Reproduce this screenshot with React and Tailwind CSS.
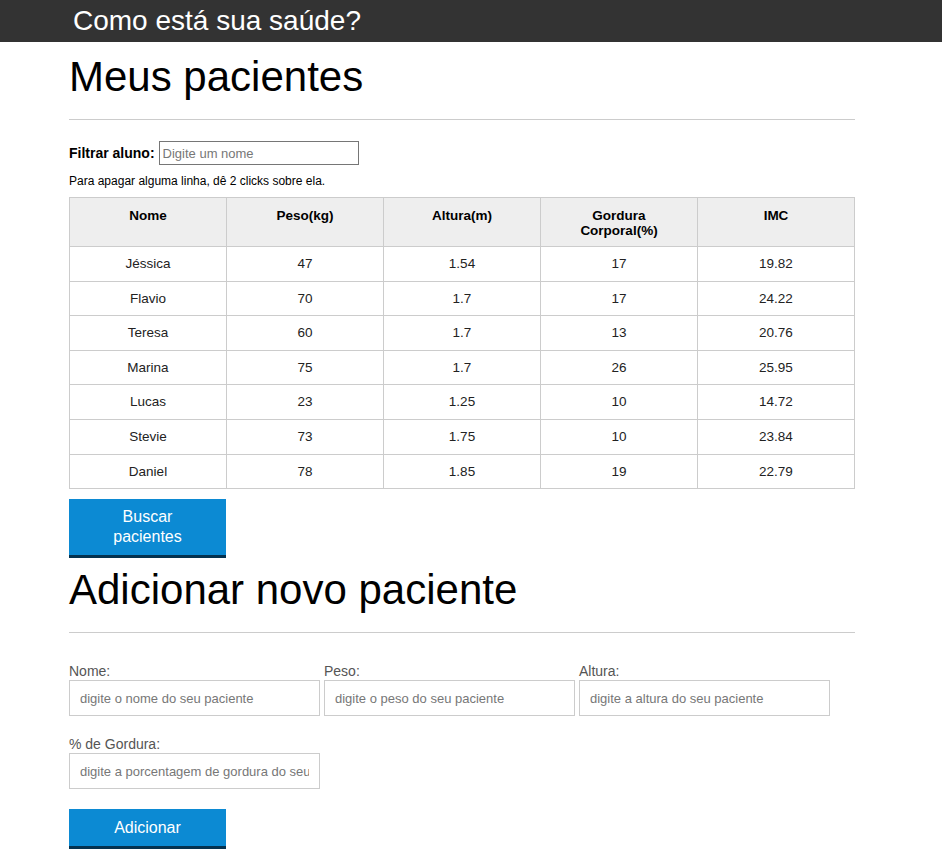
import React from "react";

const pacientes = [
  { nome: "Jéssica", peso: "47", altura: "1.54", gordura: "17", imc: "19.82" },
  { nome: "Flavio", peso: "70", altura: "1.7", gordura: "17", imc: "24.22" },
  { nome: "Teresa", peso: "60", altura: "1.7", gordura: "13", imc: "20.76" },
  { nome: "Marina", peso: "75", altura: "1.7", gordura: "26", imc: "25.95" },
  { nome: "Lucas", peso: "23", altura: "1.25", gordura: "10", imc: "14.72" },
  { nome: "Stevie", peso: "73", altura: "1.75", gordura: "10", imc: "23.84" },
  { nome: "Daniel", peso: "78", altura: "1.85", gordura: "19", imc: "22.79" },
];

const Campo = ({ label, placeholder }) => (
  <div className="flex w-[251px] flex-col">
    <label className="text-[14px] leading-[16px] text-[#555]">{label}</label>
    <input
      type="text"
      placeholder={placeholder}
      className="mt-[1px] h-[36px] w-full border border-[#ccc] px-[10px] text-[13px] outline-none placeholder:text-[#777]"
    />
  </div>
);

export default function App() {
  return (
    <div className="min-h-screen bg-white font-['Liberation_Sans',Arial,sans-serif] text-black">
      {/* Header */}
      <header className="h-[42px] bg-[#333] pl-[73px]">
        <h1 className="text-[28px] leading-[42px] text-white">Como está sua saúde?</h1>
      </header>

      <main className="ml-[69px] w-[786px]">
        {/* Lista de pacientes */}
        <section>
          <h2 className="pt-[12px] text-[42px] leading-[46px]">Meus pacientes</h2>
          <hr className="mt-[19px] border-[#ccc]" />

          <div className="mt-[21px] flex items-center gap-[4px]">
            <label className="text-[14px] font-bold">Filtrar aluno:</label>
            <input
              type="text"
              placeholder="Digite um nome"
              className="h-[24px] w-[200px] border border-[#767676] px-[3px] text-[13px] outline-none placeholder:text-[#777]"
            />
          </div>
          <p className="mt-[9px] text-[12px] leading-[14px]">Para apagar alguma linha, dê 2 clicks sobre ela.</p>

          <table className="mt-[9px] w-full table-fixed border-collapse text-center text-[#222]">
            <thead>
              <tr className="bg-[#eee]">
                {["Nome", "Peso(kg)", "Altura(m)", "Gordura Corporal(%)", "IMC"].map((h) => (
                  <th
                    key={h}
                    className="border border-[#ccc] px-[14px] pt-[10px] pb-[8px] align-top text-[13.5px] font-bold leading-[15px] text-black"
                  >
                    {h}
                  </th>
                ))}
              </tr>
            </thead>
            <tbody>
              {pacientes.map((p) => (
                <tr key={p.nome}>
                  {[p.nome, p.peso, p.altura, p.gordura, p.imc].map((v, i) => (
                    <td key={i} className="border border-[#ccc] px-3 py-[8px] text-[13.5px] leading-[17.6px]">
                      {v}
                    </td>
                  ))}
                </tr>
              ))}
            </tbody>
          </table>

          <button className="mt-[10px] block w-[157px] border-b-[3px] border-[#04324f] bg-[#0c8ad3] px-[18px] py-[8px] text-[16px] leading-[20px] text-white">
            Buscar pacientes
          </button>
        </section>

        {/* Formulário */}
        <section>
          <h2 className="mt-[9px] text-[42px] leading-[46px]">Adicionar novo paciente</h2>
          <hr className="mt-[19px] border-[#ccc]" />

          <form className="mt-[30px]" onSubmit={(e) => e.preventDefault()}>
            <div className="flex gap-[4px]">
              <Campo label="Nome:" placeholder="digite o nome do seu paciente" />
              <Campo label="Peso:" placeholder="digite o peso do seu paciente" />
              <Campo label="Altura:" placeholder="digite a altura do seu paciente" />
            </div>
            <div className="mt-[20px] flex">
              <Campo label="% de Gordura:" placeholder="digite a porcentagem de gordura do seu paciente" />
            </div>
            <button className="mt-[20px] block w-[157px] border-b-[3px] border-[#04324f] bg-[#0c8ad3] px-[10px] py-[8px] text-[16px] leading-[21px] text-white">
              Adicionar
            </button>
          </form>
        </section>
      </main>
    </div>
  );
}
